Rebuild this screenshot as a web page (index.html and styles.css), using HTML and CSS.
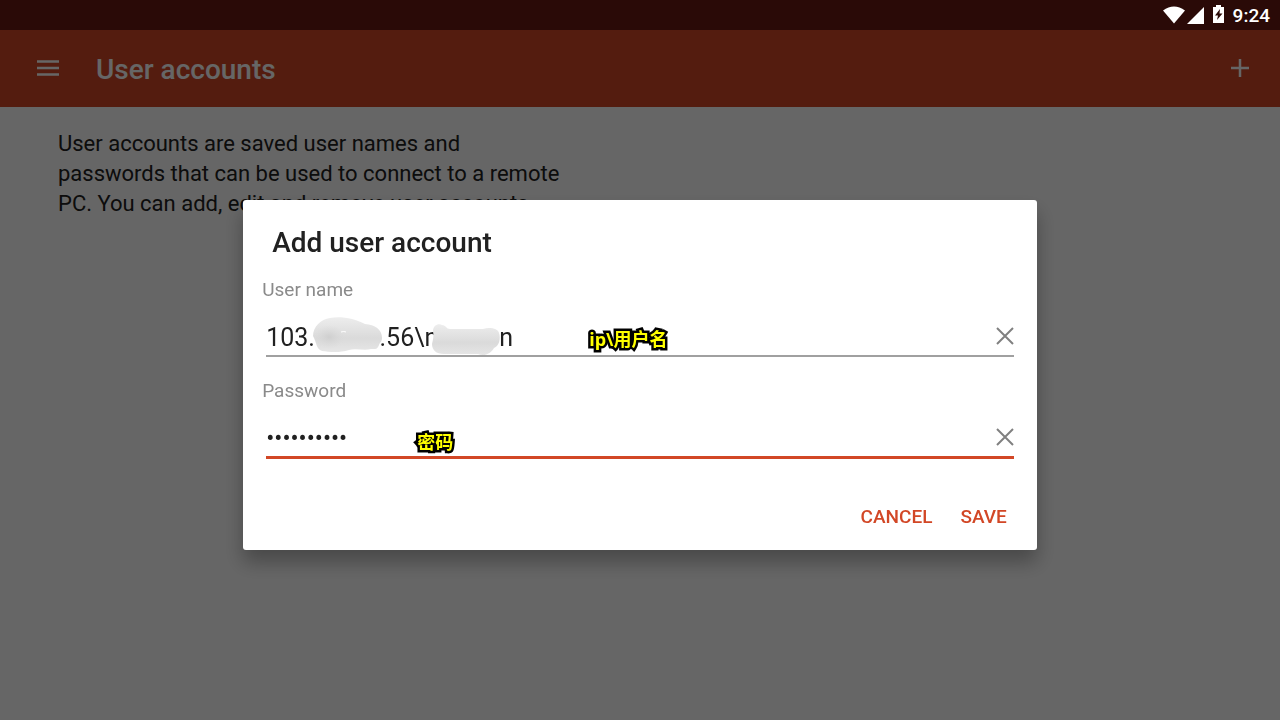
FILE: index.html
```html
<!DOCTYPE html>
<html lang="en">

	<head>
		<meta charset="utf-8">
		<title>User accounts</title>
		<link rel="stylesheet" href="styles.css">
	</head>

	<body>

		<div class="statusBar">
			<svg class="wifi" width="22" height="18" viewBox="0 0 22 18"><path d="M0 4.500Q11-3.500 22 4.500L11 17.500Z" fill="#fff"/></svg>
			<svg class="signal" width="17" height="17" viewBox="0 0 17 17"><path d="M0 17L17 0V17Z" fill="#fff"/></svg>
			<svg class="battery" width="11" height="18" viewBox="0 0 11 18"><path d="M3 0h5v2h3v16H0V2h3z" fill="#fff"/><path d="M7 4L2 10.500h3L4 15L9.500 8.500h-3z" fill="#2a0a07"/></svg>
			<span>9:24</span>
		</div>

		<header class="appBar">
			<button class="iconButton" type="button" aria-label="Menu">
				<svg width="22" height="16" viewBox="0 0 22 16"><path d="M0 1.500h22M0 8h22M0 14.500h22" stroke="#fff" stroke-width="2.500"/></svg>
			</button>
			<h1 class="appTitle">User accounts</h1>
			<button class="iconButton" type="button" aria-label="Add">
				<svg width="18" height="18" viewBox="0 0 18 18"><path d="M9 0v18M0 9h18" stroke="#fff" stroke-width="2.500"/></svg>
			</button>
		</header>

		<main class="content">
			<p class="info">User accounts are saved user names and passwords that can be used to connect to a remote PC. You can add, edit and remove user accounts.</p>
		</main>

		<div class="overlay">
			<form class="dialog" role="dialog" aria-labelledby="dialogTitle">
				<h2 class="dialogTitle" id="dialogTitle">Add user account</h2>

				<label class="label" for="userName">User name</label>
				<div class="field">
					<input class="input" id="userName" type="text" value="103.&nbsp;&nbsp;&nbsp;&nbsp;&nbsp;&nbsp;&nbsp;&nbsp;&nbsp;&nbsp;&#8202;.56\n&nbsp;&nbsp;&nbsp;&nbsp;&nbsp;&nbsp;&nbsp;&nbsp;&nbsp;&#8201;n">
					<button class="clear" type="button" aria-label="Clear user name">
						<svg width="18" height="18" viewBox="0 0 18 18"><path d="M1 1L17 17M17 1L1 17" stroke="#808080" stroke-width="2"/></svg>
					</button>
					<!-- smudged parts of the name -->
					<svg class="smudge" width="190" height="40" viewBox="0 0 190 40">
						<defs>
							<linearGradient id="fade" x1="0" y1="0" x2="0" y2="1">
								<stop offset="0" stop-color="#ededed"/>
								<stop offset=".6" stop-color="#dadada"/>
								<stop offset="1" stop-color="#e6e6e6"/>
							</linearGradient>
							<radialGradient id="spot">
								<stop offset="0" stop-color="#cfcfcf"/>
								<stop offset="1" stop-color="#dadada" stop-opacity="0"/>
							</radialGradient>
						</defs>
						<path d="M0 19C0 10 8 2 17 1C29-1 42 2 52 7C62 8 69 12 69 21C69 25 67 25 66 28C64 33 62 32 58 32C51 34 43 31 36 33C27 36 16 35 9 34C3 32 4 26 0 19Z" fill="url(#fade)"/>
						<ellipse cx="16" cy="20" rx="16" ry="12" fill="url(#spot)"/>
						<path d="M28 15q3-1 5 0" stroke="#fff" fill="none"/>
						<path d="M120 14C120 9 125 6 129 8C133 8 133 12 137 12H170C176 10 185 11 186 16C188 22 186 29 181 31C178 36 172 40 165 37H131C123 37 119 33 119 27C120 23 121 18 120 14Z" fill="url(#fade)"/>
					</svg>
					<span class="note noteUser">ip\用户名</span>
				</div>

				<label class="label" for="password">Password</label>
				<div class="field fieldActive">
					<input class="input inputPassword" id="password" type="password" value="0000000000">
					<button class="clear" type="button" aria-label="Clear password">
						<svg width="18" height="18" viewBox="0 0 18 18"><path d="M1 1L17 17M17 1L1 17" stroke="#808080" stroke-width="2"/></svg>
					</button>
					<span class="note notePassword">密码</span>
				</div>

				<div class="actions">
					<button class="action" type="button">CANCEL</button>
					<button class="action" type="button">SAVE</button>
				</div>
			</form>
		</div>

	</body>

</html>
```

FILE: styles.css
```css
* {
	box-sizing: border-box;
}

body {
	margin: 0;
	background-color: #fff;
	color: #212121;
	font-family: Roboto, "Noto Sans CJK SC", sans-serif;
}

button {
	display: flex;
	align-items: center;
	justify-content: center;
	padding: 0;
	border: 0;
	background: none;
	font-family: inherit;
	cursor: pointer;
}

.statusBar {
	position: relative;
	z-index: 2;
	display: flex;
	align-items: center;
	justify-content: flex-end;
	height: 30px;
	padding-right: 10px;
	background-color: #2a0a07;
	color: #fff;
	font-size: 19px;
	font-weight: 500;
}

.signal {
	margin: 0 9px 0 2px;
}

.battery {
	margin: 0 9px 2px 0;
}

.appBar {
	display: flex;
	align-items: center;
	height: 77px;
	padding: 0 16px 0 24px;
	background-color: #d24726;
}

.iconButton {
	width: 48px;
	height: 48px;
	padding-bottom: 2px;
}

.appTitle {
	flex: 1;
	margin: 2px 0 0 24px;
	color: #fff;
	font-size: 28px;
	font-weight: 500;
}

.content {
	padding: 22px 58px;
}

.info {
	max-width: 510px;
	margin: 0;
	font-size: 22px;
	line-height: 30px;
}

.overlay {
	position: fixed;
	inset: 0;
	z-index: 1;
	display: flex;
	align-items: center;
	justify-content: center;
	padding-top: 30px;
	background-color: rgba(0, 0, 0, 0.6);
}

.dialog {
	width: 62%;
	padding: 24px 23px 11px 19px;
	border-radius: 3px;
	background-color: #fff;
	box-shadow: 0 12px 20px rgba(0, 0, 0, 0.3);
}

.dialogTitle {
	margin: 0 0 16px 10px;
	font-size: 28px;
	font-weight: 500;
	line-height: 38px;
}

.label {
	display: block;
	color: #8a8a8a;
	font-size: 19px;
	line-height: 24px;
}

.field {
	position: relative;
	display: flex;
	align-items: center;
	height: 55px;
	margin: 0 0 22px 4px;
	padding-top: 14px;
	border-bottom: 2px solid #a0a0a0;
}

.fieldActive {
	height: 56px;
	border-bottom: 3px solid #d24726;
}

.input {
	flex: 1;
	min-width: 0;
	padding: 3px 0 0;
	border: 0;
	outline: none;
	background: none;
	color: #212121;
	font-family: inherit;
	font-size: 25px;
}

.inputPassword {
	font-size: 24px;
}

.clear {
	width: 18px;
	height: 36px;
}

.smudge {
	position: absolute;
	left: 47px;
	top: 15px;
}

/* yellow notes drawn over the fields */
.note {
	position: absolute;
	color: #ff0;
	font-family: "Open Sans", "Noto Sans CJK SC", sans-serif;
	font-size: 18px;
	font-weight: 700;
	line-height: 24px;
	-webkit-text-stroke: 5px #000;
	stroke-linejoin: round;
	paint-order: stroke fill;
}

.noteUser {
	left: 323px;
	top: 25px;
}

.notePassword {
	left: 151px;
	top: 27px;
}

.actions {
	display: flex;
	justify-content: flex-end;
	gap: 28px;
	padding: 12px 7px 0 0;
}

.action {
	height: 46px;
	color: #d24726;
	font-size: 19px;
	font-weight: 500;
}
```
